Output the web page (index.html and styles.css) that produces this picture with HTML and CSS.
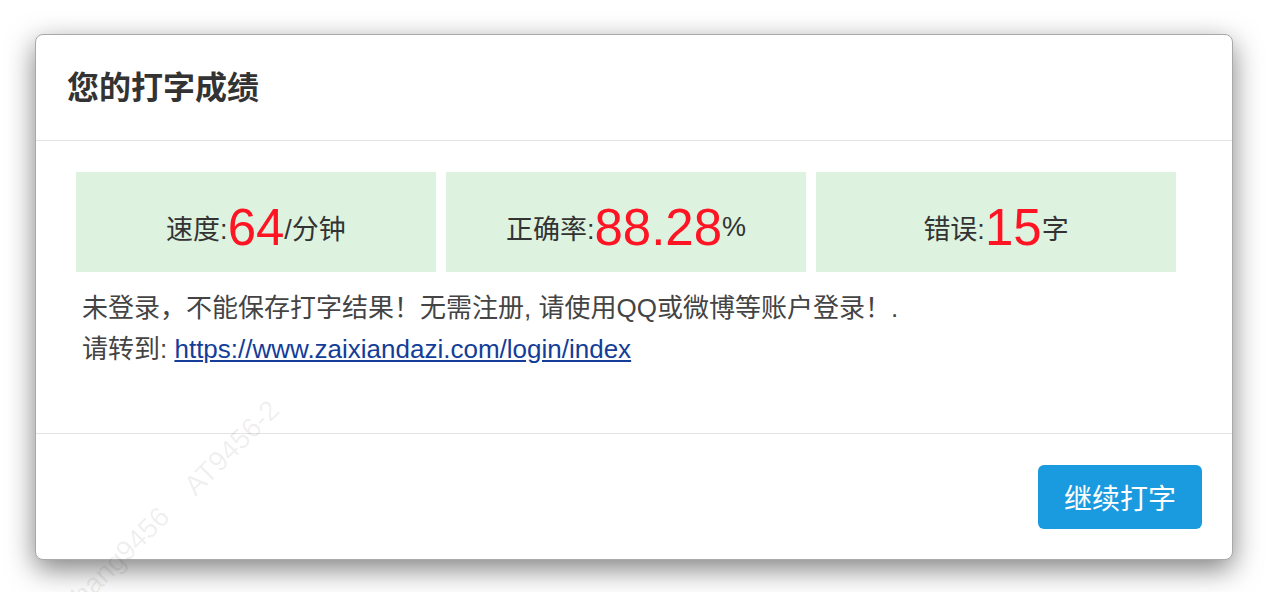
FILE: index.html
```html
<!DOCTYPE html>
<html lang="zh-CN">
<head>
  <meta charset="UTF-8" />
  <meta name="viewport" content="width=device-width, initial-scale=1.0"/>
  <title>您的打字成绩</title>
  <link rel="stylesheet" href="styles.css">
</head>
<body>
  <div class="page">
    <div class="modal">
      <div class="modal-header">
        <h4 class="modal-title">您的打字成绩</h4>
      </div>

      <div class="modal-body">
        <div class="stats">
          <div class="stat">速度:<span class="num">64</span>/分钟</div>
          <div class="stat">正确率:<span class="num">88.28</span>%</div>
          <div class="stat">错误:<span class="num">15</span>字</div>
        </div>
        <div class="msg">
          未登录，不能保存打字结果！无需注册, 请使用QQ或微博等账户登录！.<br>
          请转到: <a href="https://www.zaixiandazi.com/login/index">https://www.zaixiandazi.com/login/index</a>
        </div>
      </div>

      <div class="modal-footer">
        <button class="btn-go">继续打字</button>
      </div>
    </div>

    <span class="mark mark-1">zhang9456</span>
    <span class="mark mark-2">AT9456-2</span>
  </div>
</body>
</html>
```

FILE: styles.css
```css
body {
  margin: 0;
  background: #fff;
  font-family: "Liberation Sans", "Noto Sans CJK SC", sans-serif;
}
.page {
  position: relative;
  height: 592px;
  overflow: hidden;
  padding: 34px 0 0 35px;
  box-sizing: border-box;
}
.modal {
  width: 1198px;
  height: 526px;
  box-sizing: border-box;
  background: #fff;
  border: 1px solid #a9a9a9;
  border-radius: 8px;
  box-shadow: 0 9px 28px rgba(0, 0, 0, 0.5);
  display: flex;
  flex-direction: column;
}
.modal-header {
  height: 105px;
  box-sizing: border-box;
  display: flex;
  align-items: center;
  padding: 0 31px 6px;
  border-bottom: 1px solid #e3e3e3;
  flex: none;
  height: 106px;
}
.modal-title {
  margin: 0;
  font-family: "Noto Sans CJK SC", sans-serif;
  font-size: 32px;
  font-weight: bold;
  color: #333;
}
.modal-body {
  height: 293px;
  flex: none;
  box-sizing: border-box;
  padding: 31px 40px 0;
  border-bottom: 1px solid #e3e3e3;
}
.stats {
  display: flex;
  gap: 10px;
}
.stat {
  width: 360px;
  height: 100px;
  box-sizing: border-box;
  padding-top: 10px;
  background: #ddf2df;
  display: flex;
  align-items: center;
  justify-content: center;
  font-size: 27px;
  color: #333;
  white-space: pre;
}
.num {
  font-size: 51px;
  color: #ff1424;
}
.msg {
  margin-top: 16px;
  padding-left: 6px;
  font-size: 26px;
  line-height: 41px;
  color: #444;
}
.msg a {
  color: #133d98;
}
.modal-footer {
  flex: 1;
  display: flex;
  justify-content: flex-end;
  align-items: flex-start;
  padding: 31px 30px 0;
}
.btn-go {
  width: 164px;
  height: 64px;
  border: none;
  border-radius: 6px;
  background: #1b9bdf;
  color: #fff;
  font-family: "Noto Sans CJK SC", sans-serif;
  font-size: 28px;
}
.mark {
  position: absolute;
  transform: translate(-50%, -50%) rotate(-45deg);
  font-size: 28px;
  color: rgba(0, 0, 0, 0.07);
  white-space: nowrap;
  pointer-events: none;
}
.mark-1 {
  left: 116px;
  top: 561px;
}
.mark-2 {
  left: 232px;
  top: 448px;
}
```
